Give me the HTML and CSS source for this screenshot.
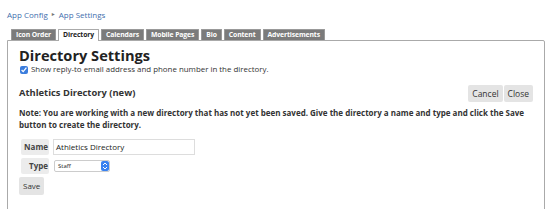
FILE: index.html
```html
<!DOCTYPE html>
<html>
<head>
<meta charset="utf-8">
<link rel="stylesheet" href="styles.css">
</head>
<body>
<div class="page">
  <div class="crumbs"><a class="crumb">App Config</a><span class="sep">&#9656;</span><a class="crumb">App Settings</a></div>
  <div class="tabs">
    <span class="tab">Icon Order</span>
    <span class="tab active">Directory</span>
    <span class="tab">Calendars</span>
    <span class="tab">Mobile Pages</span>
    <span class="tab">Bio</span>
    <span class="tab">Content</span>
    <span class="tab">Advertisements</span>
  </div>
  <div class="panel">
    <h1 class="title">Directory Settings</h1>
    <label class="check"><input type="checkbox" checked> Show reply-to email address and phone number in the directory.</label>
    <div class="dirhead">
      <h2 class="subtitle">Athletics Directory (new)</h2>
      <div class="btns"><span class="btn">Cancel</span><span class="btn">Close</span></div>
    </div>
    <p class="note">Note: You are working with a new directory that has not yet been saved. Give the directory a name and type and click the Save button to create the directory.</p>
    <div class="row"><span class="lbl">Name</span><span class="input">Athletics Directory</span></div>
    <div class="row"><span class="lbl">Type</span><span class="select"><span class="seltext">Staff</span><span class="arrow"><svg width="6" height="8" viewBox="0 0 6 8"><path d="M1 3 L3 1 L5 3 M1 5 L3 7 L5 5" fill="none" stroke="#fff" stroke-width="1"/></svg></span></span></div>
    <div class="btn save">Save</div>
  </div>
</div>
</body>
</html>
```

FILE: styles.css
```css
html, body { margin: 0; padding: 0; background: #fff; }
body { font-family: "Open Sans", "DejaVu Sans", sans-serif; color: #333; }
.page { padding: 8px 6px 0 7px; width: 538px; }
.crumbs { font-size: 8px; height: 13px; line-height: 13px; display: flex; align-items: center; gap: 4px; }
.crumb { color: #3f6fae; }
.sep { color: #777; font-size: 6px; }
.tabs { display: flex; gap: 2px; margin-top: 8px; padding-left: 4px; height: 11px; align-items: flex-end; }
.tab { background: #7b7b7b; color: #fff; font-weight: 700; font-size: 6.8px; line-height: 10px; height: 10px; padding: 0 4px; border: 1px solid #999; border-bottom: none; border-radius: 1px 1px 0 0; letter-spacing: -0.1px; }
.tab.active { background: #fff; color: #222; border-color: #aaa; height: 11px; position: relative; top: 1px; }
.panel { border: 1px solid #aaa; border-radius: 0 2px 0 0; padding: 6px 11px 10px 11px; height: 152px; }
.title { margin: 0; font-size: 14.6px; line-height: 16px; font-weight: 700; color: #222; }
.check { display: flex; align-items: center; font-size: 7.9px; line-height: 11px; gap: 3px; margin-top: 1px; padding-left: 1px; }
.check input { margin: 0; width: 8px; height: 8px; accent-color: #3b7ddd; }
.dirhead { display: flex; justify-content: space-between; align-items: flex-end; margin-top: 10px; }
.subtitle { margin: 0 0 3px 0; font-size: 9.4px; font-weight: 700; color: #333; }
.btns { display: flex; gap: 1px; }
.btn { background: #e4e4e4; color: #333; font-size: 8.5px; line-height: 17px; height: 17px; padding: 0 4px; border-radius: 2px; display: inline-block; }
.note { margin: 5px 0 8px 0; font-size: 8px; line-height: 12px; font-weight: 700; color: #333; }
.row { display: flex; align-items: center; gap: 4px; margin-left: 2px; margin-bottom: 3px; }
.lbl { background: #ececec; font-weight: 700; font-size: 8px; width: 27px; height: 16px; line-height: 16px; text-align: right; padding-right: 1px; border-radius: 2px; color: #444; }
.input { width: 138px; height: 14px; line-height: 14px; border: 1px solid #ddd; font-size: 8px; padding-left: 2px; color: #222; }
.select { display: flex; width: 54px; height: 10px; border: 1px solid #ccc; border-radius: 2px; margin-left: 1px; font-size: 6px; line-height: 10px; overflow: hidden; }
.seltext { flex: 1; padding-left: 3px; color: #222; }
.arrow { width: 8px; background: #3a82f0; display: flex; align-items: center; justify-content: center; border-radius: 2px; }
.save { display: block; width: fit-content; margin-top: 2px; line-height: 18px; height: 18px; padding: 0 4px; font-size: 8px; }
```
